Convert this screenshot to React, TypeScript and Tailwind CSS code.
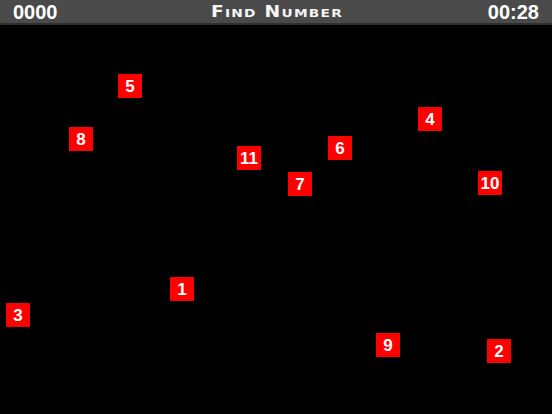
import React from "react";

const boxes = [
  { n: 5, x: 118, y: 74 },
  { n: 8, x: 69, y: 127 },
  { n: 4, x: 418, y: 107 },
  { n: 6, x: 328, y: 136 },
  { n: 11, x: 237, y: 146 },
  { n: 7, x: 288, y: 172 },
  { n: 10, x: 478, y: 171 },
  { n: 1, x: 170, y: 277 },
  { n: 3, x: 6, y: 303 },
  { n: 9, x: 376, y: 333 },
  { n: 2, x: 487, y: 339 },
];

export default function App() {
  return (
    <div
      className="w-[552px] h-[414px] bg-black flex flex-col overflow-hidden"
      style={{ fontFamily: '"Liberation Sans", Arial, sans-serif' }}
    >
      <div className="h-[25px] shrink-0 bg-[#4a4a4a] border-b-2 border-[#2f2f2f] flex items-center justify-between px-[13px] text-white">
        <span className="text-[20px] font-bold leading-none w-[60px]">0000</span>
        <span
          className="text-[15px] font-bold leading-none tracking-[1px] [font-variant:small-caps] text-[#f6f6f6] scale-x-[1.25] translate-y-[1px] pl-[1px]"
          style={{ fontFamily: '"DejaVu Sans", sans-serif' }}
        >
          Find Number
        </span>
        <span className="text-[20px] font-bold leading-none w-[60px] text-right">00:28</span>
      </div>
      <div className="relative flex-1">
        {boxes.map((b) => (
          <div
            key={b.n}
            className="absolute w-[24px] h-[24px] bg-[#ff0000] text-white font-bold text-[17px] leading-none flex items-center justify-center"
            style={{ left: b.x, top: b.y - 25 }}
          >
            {b.n}
          </div>
        ))}
      </div>
    </div>
  );
}
